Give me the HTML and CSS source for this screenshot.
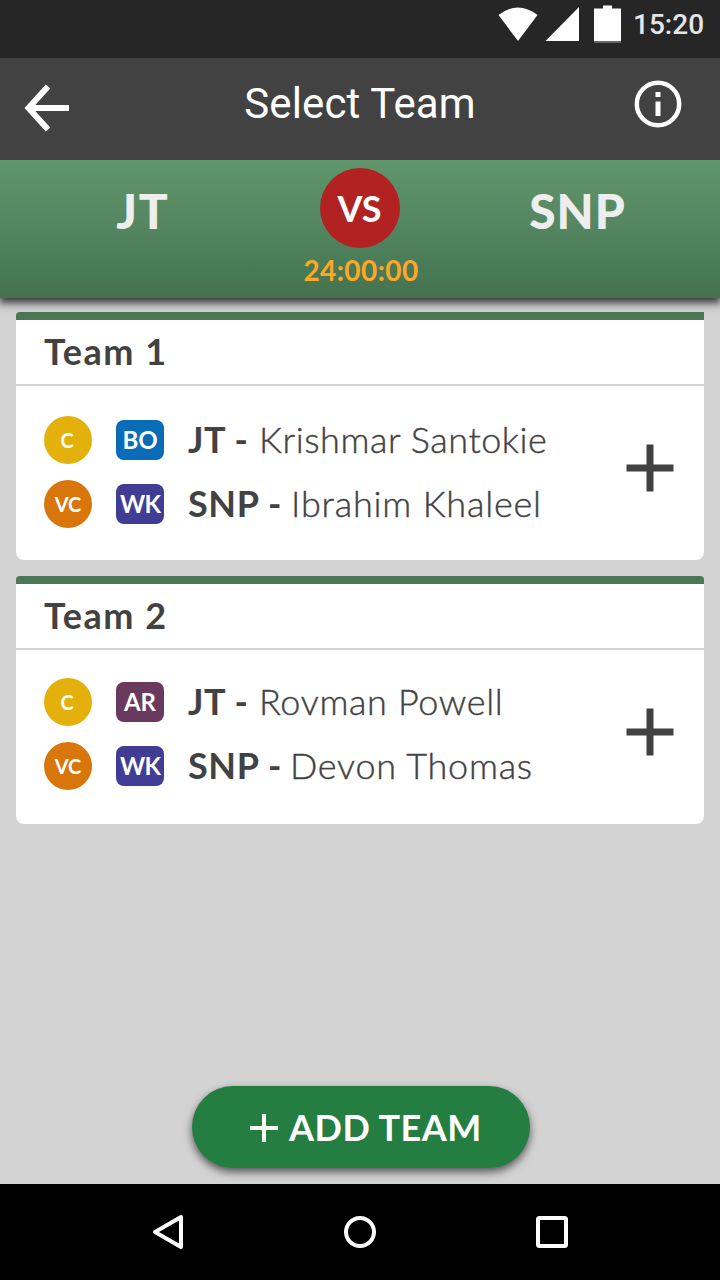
FILE: index.html
```html
<!DOCTYPE html>
<html lang="en">
<head>
<meta charset="utf-8">
<title>Select Team</title>
<link rel="stylesheet" href="styles.css">
</head>
<body>
<div class="screen">
  <div class="status">
    <svg class="status-icons" width="128" height="58" viewBox="0 0 128 58" fill="#fff">
      <path d="M2.500 15 Q22 0 41.500 15 L22 41 Z"/>
      <path d="M49.500 41 L83 7 V41 Z"/>
      <path d="M98 8.500 H107 V5.500 H116 V8.500 H125 V41 H98 Z"/>
      <path d="M98 41 H125 V43 H98 Z" fill="#666"/>
    </svg>
    <span class="clock">15:20</span>
  </div>
  <header class="appbar">
    <svg class="back" width="48" height="50" viewBox="0 0 48 50" fill="none" stroke="#fff">
      <path d="M26 3.500 L6.500 25 L26 46.500" stroke-width="6"/>
      <path d="M5 25 H47" stroke-width="6"/>
    </svg>
    <h1 class="title">Select Team</h1>
    <svg class="info" width="48" height="48" viewBox="0 0 48 48">
      <circle cx="24" cy="24" r="21.200" fill="none" stroke="#fff" stroke-width="4.500"/>
      <path d="M21.500 12 H26.500 V17 H21.500 Z M21.500 21.500 H26.500 V36 H21.500 Z" fill="#fff"/>
    </svg>
  </header>
  <section class="match">
    <div class="side side-home">JT</div>
    <div class="middle">
      <div class="versus">VS</div>
      <div class="timer">24:00:00</div>
    </div>
    <div class="side side-away">SNP</div>
  </section>
  <main class="teams">
    <article class="card card-first">
      <h2 class="card-title">Team 1</h2>
      <div class="card-body">
        <div class="players">
          <div class="player"><span class="role captain">C</span><span class="pos bowler">BO</span><span class="code code-jt">JT -</span><span class="name n1">Krishmar Santokie</span></div>
          <div class="player"><span class="role vice">VC</span><span class="pos keeper">WK</span><span class="code code-snp">SNP -</span><span class="name n2">Ibrahim Khaleel</span></div>
        </div>
        <svg class="plus" width="48" height="48" viewBox="0 0 48 48"><path d="M24 0.500 V47.500 M0.500 24 H47.500" stroke="#424242" stroke-width="7"/></svg>
      </div>
    </article>
    <article class="card card-second">
      <h2 class="card-title">Team 2</h2>
      <div class="card-body">
        <div class="players">
          <div class="player"><span class="role captain">C</span><span class="pos allround">AR</span><span class="code code-jt">JT -</span><span class="name n3">Rovman Powell</span></div>
          <div class="player"><span class="role vice">VC</span><span class="pos keeper">WK</span><span class="code code-snp">SNP -</span><span class="name n4">Devon Thomas</span></div>
        </div>
        <svg class="plus" width="48" height="48" viewBox="0 0 48 48"><path d="M24 0.500 V47.500 M0.500 24 H47.500" stroke="#424242" stroke-width="7"/></svg>
      </div>
    </article>
    <button class="add"><svg width="28" height="28" viewBox="0 0 28 28"><path d="M14 0 V28 M0 14 H28" stroke="#fff" stroke-width="4"/></svg><span class="add-label">ADD TEAM</span></button>
  </main>
  <nav class="navbar">
    <svg width="96" height="96" viewBox="0 0 96 96" fill="none" stroke="#fff" stroke-width="4" stroke-linejoin="round"><path d="M35 48 L61 33 V63 Z"/></svg>
    <svg width="96" height="96" viewBox="0 0 96 96" fill="none" stroke="#fff" stroke-width="4"><circle cx="48" cy="48" r="14"/></svg>
    <svg width="96" height="96" viewBox="0 0 96 96" fill="none" stroke="#fff" stroke-width="4"><rect x="34" y="34" width="28" height="28" rx="1.500"/></svg>
  </nav>
</div>
</body>
</html>
```
FILE: styles.css
```css
* { box-sizing: border-box; }
body { margin: 0; font-family: Lato, "Open Sans", sans-serif; color: #424242; }
.screen { width: 720px; height: 1280px; display: flex; flex-direction: column; background: #d3d3d3; overflow: hidden; }
.status { height: 58px; background: #262626; display: flex; justify-content: flex-end; padding-right: 16px; }
.status-icons { display: block; margin-right: 9px; }
.clock { width: 71px; font: 500 28px/50px Roboto, sans-serif; color: #e5e5e5; white-space: nowrap; }
.appbar { height: 102px; background: #424242; display: flex; justify-content: space-between; padding: 0 38px 0 22px; position: relative; z-index: 2; }
.back { margin-top: 25px; }
.info { margin-top: 22px; }
.title { margin: 0 0 0 16px; font: 400 42px/92px Roboto, sans-serif; letter-spacing: 0.15px; color: #fff; white-space: nowrap; }
.match { height: 138px; display: flex; position: relative; z-index: 1; background: linear-gradient(#60966a, #558762 45%, #497a56 80%, #46714f); box-shadow: 0 4px 8px 1px rgba(0, 0, 0, 0.75); }
.side { width: 284px; text-align: center; font-size: 48px; font-weight: 900; line-height: 101px; letter-spacing: 1px; color: #eee; }
.side-home { letter-spacing: 2px; padding-left: 2px; }
.side-away { padding-right: 1px; }
.middle { width: 152px; display: flex; flex-direction: column; align-items: center; padding-top: 8px; }
.versus { width: 80px; height: 80px; border-radius: 50%; background: #b22222; color: #fff; font-size: 36px; font-weight: 700; line-height: 80px; text-align: center; padding-right: 1px; }
.timer { font-size: 28px; font-weight: 700; line-height: 44px; letter-spacing: 0.4px; padding-left: 2px; color: #ffa726; white-space: nowrap; }
.teams { height: 886px; padding: 14px 16px 0; display: flex; flex-direction: column; }
.card { height: 248px; margin-bottom: 16px; border-top: 8px solid #4a7856; border-radius: 4px 4px 8px 8px; background: #fff; }
.card-first { border-top-right-radius: 0; }
.card-title { margin: 0; height: 66px; padding-left: 28px; border-bottom: 2px solid #d3d3d3; font-size: 36px; font-weight: 700; line-height: 62px; letter-spacing: 1.5px; }
.card-body { display: flex; justify-content: space-between; padding: 0 30px 0 28px; }
.players { display: flex; flex-direction: column; gap: 16px; padding-top: 30px; }
.card-second .players { padding-top: 28px; }
.player { height: 48px; display: flex; align-items: center; }
.role { width: 48px; height: 48px; border-radius: 50%; color: #fff; font-size: 20px; font-weight: 700; line-height: 49px; text-align: center; padding-right: 2px; }
.captain { background: #e4b00c; }
.vice { background: #d8760c; padding-right: 0; }
.pos { width: 48px; height: 40px; margin: 0 24px; border-radius: 8px; color: #fff; font-size: 24px; font-weight: 700; line-height: 40px; text-align: center; }
.bowler { background: #0a6bb7; }
.keeper { background: #413d94; letter-spacing: -0.8px; }
.allround { background: #6a3a5e; }
.code, .name { font-size: 36px; line-height: 46px; height: 48px; white-space: nowrap; }
.code { font-weight: 700; letter-spacing: 0.6px; }
.code-jt { width: 71px; }
.code-snp { width: 103px; }
.name { font-weight: 300; -webkit-text-stroke: 0.4px #424242; }
.n1 { letter-spacing: 0.55px; }
.n2 { letter-spacing: 0.8px; }
.n3 { letter-spacing: 0.65px; }
.n4 { letter-spacing: 0.75px; margin-left: -1px; }
.plus { display: block; margin-top: 58px; }
.add { display: flex; align-items: center; align-self: center; width: 338px; height: 82px; margin: 246px 0 0 2px; padding: 2px 0 0 58px; border: 0; border-radius: 41px; background: #247e41; box-shadow: 0 4px 8px rgba(0, 0, 0, 0.6); color: #fff; font: 700 36px/78px Lato, sans-serif; white-space: nowrap; }
.add-label { margin-left: 11px; padding-bottom: 2px; letter-spacing: 0.5px; }
.navbar { height: 96px; background: #000; display: flex; justify-content: space-between; padding: 0 120px; position: relative; }
```
